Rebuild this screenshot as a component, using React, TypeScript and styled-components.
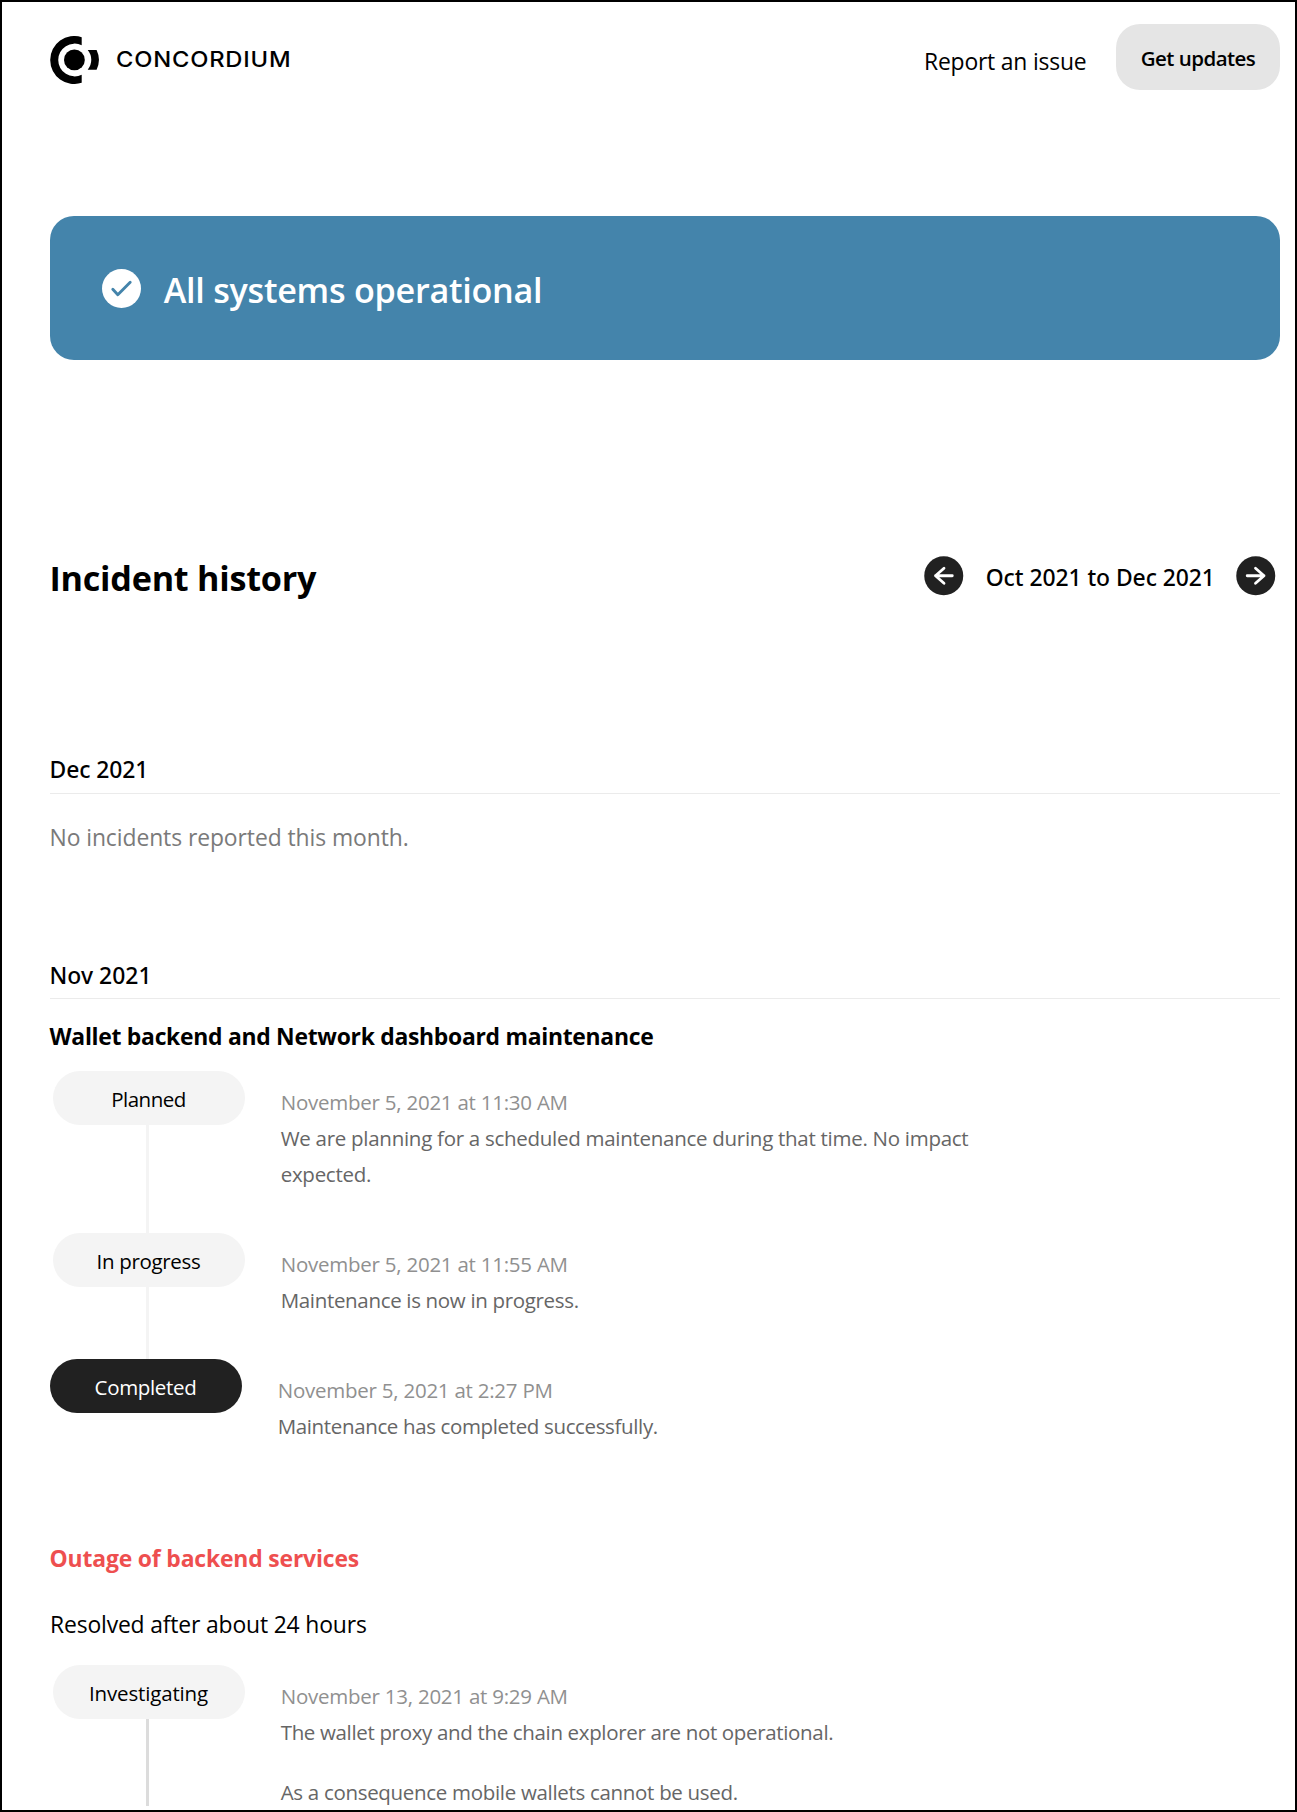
import React from "react";
import styled, { createGlobalStyle } from "styled-components";

const sans = `"Open Sans", "Noto Sans", sans-serif`;
const medium = `"Noto Sans", "Open Sans", sans-serif`;

const GlobalStyle = createGlobalStyle`
  * { box-sizing: border-box; margin: 0; padding: 0; }
  body { margin: 0; background: #fff; color: #000; font-family: ${sans}; }
`;

type Spaced = { $ls?: number };

const Page = styled.main`
  width: 1297px;
  height: 1812px;
  overflow: hidden;
  border: 2px solid #000;
  padding: 22px 15px 0 48px;
  background: #fff;
`;

const Header = styled.header`
  display: flex;
  align-items: flex-start;
  height: 66px;
`;

const Brand = styled.div`
  display: flex;
  align-items: center;
  margin: 12px auto 0 0;
  height: 48px;
  svg { display: block; flex: none; }
`;

const Wordmark = styled.span`
  margin: -2px 0 0 16.3px;
  font: 500 21.6px/30px Inter, sans-serif;
  letter-spacing: 0.72px;
  white-space: nowrap;
  transform: scaleX(1.1);
  transform-origin: left center;
`;

const IssueLink = styled.a`
  width: 162px;
  margin: 20px 30px 0 0;
  font-size: 22.9px;
  line-height: 36px;
  letter-spacing: -0.2px;
  white-space: nowrap;
`;

const UpdatesButton = styled.button`
  width: 164px;
  height: 66px;
  padding-top: 2px;
  border: 0;
  border-radius: 24px;
  background: #e5e5e5;
  color: #000;
  font: 600 20.5px/36px ${sans};
  letter-spacing: -0.53px;
  white-space: nowrap;
`;

const Banner = styled.section`
  display: flex;
  align-items: center;
  gap: 22.5px;
  height: 144px;
  margin-top: 126px;
  padding-left: 52.3px;
  border-radius: 24px;
  background: #4484ab;
  svg { display: block; }
`;

const BannerText = styled.h1`
  margin-top: 3px;
  color: #fff;
  font-size: 34.2px;
  font-weight: 600;
  line-height: 48px;
  letter-spacing: -0.28px;
`;

const HistoryHead = styled.div`
  display: flex;
  align-items: center;
  justify-content: space-between;
  height: 40px;
  margin-top: 196px;
`;

const HistoryTitle = styled.h2`
  margin: 4px 0 0 -0.5px;
  font-size: 34.2px;
  line-height: 48px;
  letter-spacing: -0.25px;
`;

const Pager = styled.div`
  display: flex;
  align-items: center;
  margin-right: 4.3px;
`;

const PagerButton = styled.button`
  display: block;
  width: 39.5px;
  height: 39.5px;
  border: 0;
  background: none;
  svg { display: block; }
`;

const Range = styled.span`
  width: 228.2px;
  margin: 3px 22.3px 0 22px;
  font: 500 22.9px/36px ${medium};
  letter-spacing: -0.06px;
  white-space: nowrap;
`;

const Month = styled.section<{ $gap: number }>`
  margin-top: ${(p) => p.$gap}px;
`;

const MonthTitle = styled.h3<Spaced & { $pad: number }>`
  padding-bottom: ${(p) => p.$pad}px;
  border-bottom: 1px solid #ebebeb;
  font: 500 22.9px/36px ${medium};
  letter-spacing: ${(p) => p.$ls}px;
  text-indent: -0.5px;
`;

const Empty = styled.p`
  margin-top: 26px;
  color: #7a7a7a;
  font-size: 22.9px;
  line-height: 36px;
  letter-spacing: -0.08px;
  text-indent: -0.5px;
`;

const IncidentTitle = styled.h4<Spaced & { $gap: number; $outage?: boolean }>`
  margin-top: ${(p) => p.$gap}px;
  color: ${(p) => (p.$outage ? "#ee4f4f" : "#000")};
  font-size: 22.9px;
  line-height: 36px;
  letter-spacing: ${(p) => p.$ls}px;
  text-indent: -0.5px;
`;

const Duration = styled.p`
  margin-top: 30px;
  font-size: 22.9px;
  line-height: 36px;
  letter-spacing: -0.16px;
`;

const Timeline = styled.ol<{ $gap: number }>`
  margin-top: ${(p) => p.$gap}px;
  list-style: none;
`;

const Event = styled.li<{ $final?: boolean }>`
  display: flex;
  gap: 35.7px;
  padding-left: ${(p) => (p.$final ? 0 : 3)}px;
`;

const Rail = styled.div`
  display: flex;
  flex-direction: column;
  flex: 0 0 192px;
`;

const Pill = styled.span<Spaced & { $final?: boolean }>`
  height: 54px;
  padding: 1px 1px 0 0;
  border-radius: 27px;
  background: ${(p) => (p.$final ? "#212121" : "#f4f4f4")};
  color: ${(p) => (p.$final ? "#fff" : "#000")};
  font-size: 20.5px;
  line-height: 54px;
  letter-spacing: ${(p) => p.$ls}px;
  text-align: center;
`;

const Connector = styled.i<{ $dark?: boolean }>`
  flex: 1;
  width: 3px;
  max-height: ${(p) => (p.$dark ? "87px" : "none")};
  margin-left: 93px;
  background: ${(p) => (p.$dark ? "#dcdcdc" : "#f4f4f4")};
`;

const Details = styled.div`
  width: 720px;
  padding: 13px 0 41px;
  font-size: 20.5px;
  line-height: 36px;
`;

const Stamp = styled.time`
  display: block;
  color: #909090;
  letter-spacing: -0.24px;
`;

const Message = styled.p<Spaced>`
  color: #666;
  letter-spacing: ${(p) => p.$ls}px;
  & + & { margin-top: 24px; }
`;

type Update = {
  status: string;
  statusLs: number;
  time: string;
  messages: [string, number][];
  final?: boolean;
  dark?: boolean;
};

const maintenance: Update[] = [
  {
    status: "Planned",
    statusLs: -0.5,
    time: "November 5, 2021 at 11:30 AM",
    messages: [["We are planning for a scheduled maintenance during that time. No impact expected.", -0.28]],
  },
  {
    status: "In progress",
    statusLs: -0.32,
    time: "November 5, 2021 at 11:55 AM",
    messages: [["Maintenance is now in progress.", -0.33]],
  },
  {
    status: "Completed",
    statusLs: -0.34,
    time: "November 5, 2021 at 2:27 PM",
    messages: [["Maintenance has completed successfully.", -0.36]],
    final: true,
  },
];

const outage: Update[] = [
  {
    status: "Investigating",
    statusLs: -0.16,
    time: "November 13, 2021 at 9:29 AM",
    messages: [
      ["The wallet proxy and the chain explorer are not operational.", -0.34],
      ["As a consequence mobile wallets cannot be used.", -0.31],
    ],
    dark: true,
  },
];

const LogoMark = () => (
  <svg width="50" height="48" viewBox="0 0 50 48">
    <path d="M31.7 1.2A24 24 0 1 0 31.7 46.8V38.8A16.4 16.4 0 1 1 31.7 9.2Z" />
    <circle cx="24.4" cy="23.9" r="10.4" />
    <path d="M37.7 13.9H46.6A23 23 0 0 1 46.6 33.7H37.7A15.5 15.5 0 0 0 37.7 13.9Z" />
  </svg>
);

const CheckIcon = () => (
  <svg width="39" height="39" viewBox="0 0 39 39">
    <circle cx="19.5" cy="19.5" r="19.5" fill="#fff" />
    <path d="M10.8 20.3L15.8 25.7L28.2 13.3" fill="none" stroke="#4484ab" strokeWidth="2.9" strokeLinecap="round" strokeLinejoin="round" />
  </svg>
);

const ArrowIcon = ({ next }: { next?: boolean }) => (
  <svg width="39.5" height="39.5" viewBox="0 0 39.5 39.5">
    <circle cx="19.75" cy="19.75" r="19.5" fill="#212121" />
    <path
      d={next ? "M11.2 19.75H28M19.5 12.2L28 19.75L19.5 27.3" : "M28.3 19.75H11.5M20 12.2L11.5 19.75L20 27.3"}
      fill="none"
      stroke="#fff"
      strokeWidth="2.8"
      strokeLinecap="round"
      strokeLinejoin="round"
    />
  </svg>
);

const Updates = ({ items, gap }: { items: Update[]; gap: number }) => (
  <Timeline $gap={gap}>
    {items.map((u) => (
      <Event key={u.status} $final={u.final}>
        <Rail>
          <Pill $final={u.final} $ls={u.statusLs}>{u.status}</Pill>
          {!u.final && <Connector $dark={u.dark} />}
        </Rail>
        <Details>
          <Stamp>{u.time}</Stamp>
          {u.messages.map(([text, ls]) => (
            <Message key={text} $ls={ls}>{text}</Message>
          ))}
        </Details>
      </Event>
    ))}
  </Timeline>
);

export default function App() {
  return (
    <>
      <GlobalStyle />
      <Page>
        <Header>
          <Brand>
            <LogoMark />
            <Wordmark>CONCORDIUM</Wordmark>
          </Brand>
          <IssueLink>Report an issue</IssueLink>
          <UpdatesButton>Get updates</UpdatesButton>
        </Header>
        <Banner>
          <CheckIcon />
          <BannerText>All systems operational</BannerText>
        </Banner>
        <HistoryHead>
          <HistoryTitle>Incident history</HistoryTitle>
          <Pager>
            <PagerButton aria-label="Previous"><ArrowIcon /></PagerButton>
            <Range>Oct 2021 to Dec 2021</Range>
            <PagerButton aria-label="Next"><ArrowIcon next /></PagerButton>
          </Pager>
        </HistoryHead>
        <Month $gap={156}>
          <MonthTitle $ls={-0.08} $pad={5}>Dec 2021</MonthTitle>
          <Empty>No incidents reported this month.</Empty>
        </Month>
        <Month $gap={102}>
          <MonthTitle $ls={0.06} $pad={4}>Nov 2021</MonthTitle>
          <IncidentTitle $gap={20} $ls={-0.28}>Wallet backend and Network dashboard maintenance</IncidentTitle>
          <Updates items={maintenance} gap={16} />
          <IncidentTitle $gap={56} $ls={-0.16} $outage>Outage of backend services</IncidentTitle>
          <Duration>Resolved after about 24 hours</Duration>
          <Updates items={outage} gap={22} />
        </Month>
      </Page>
    </>
  );
}
